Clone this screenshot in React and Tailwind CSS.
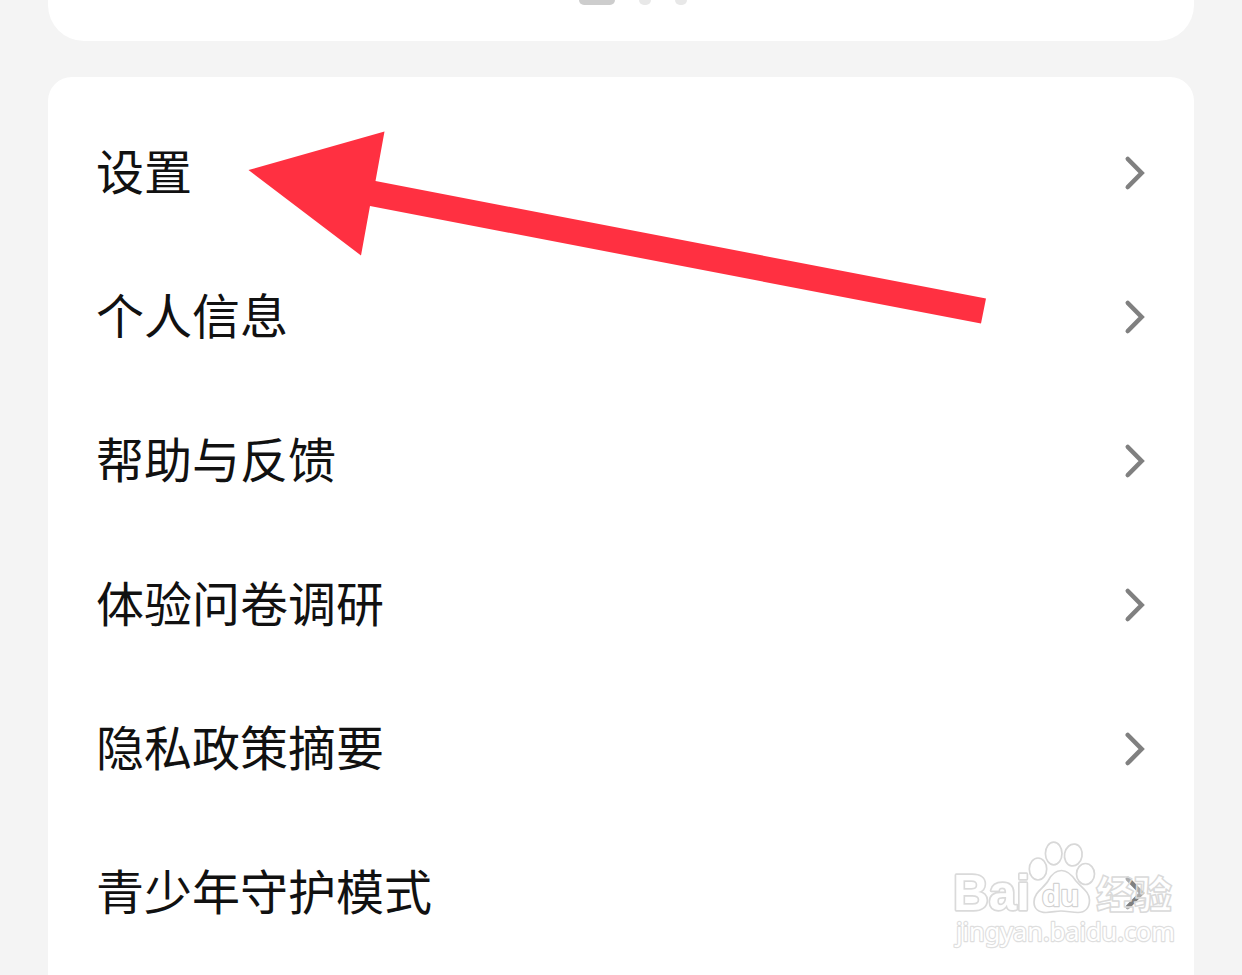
const MENU_ITEMS = ["设置", "个人信息", "帮助与反馈", "体验问卷调研", "隐私政策摘要", "青少年守护模式"];

function Chevron() {
  return (
    <svg width="24" height="36" viewBox="0 0 24 36" fill="none" className="shrink-0">
      <path d="M5.8 4 L19.6 18 L5.8 32" stroke="#808080" strokeWidth="4.6" strokeLinecap="round" />
    </svg>
  );
}

function MenuRow({ label }) {
  return (
    <li className="flex h-36 items-center justify-between">
      <span className="pb-[9px] text-5xl leading-none text-[#111111]">{label}</span>
      <Chevron />
    </li>
  );
}

function PageDots() {
  return (
    <div className="flex items-start justify-center gap-6 pl-[23px]">
      <span className="h-[5px] w-9 rounded-b-[6px] bg-[#cdcdcd]" />
      <span className="h-[5px] w-3 rounded-b-[6px] bg-[#e8e8e8]" />
      <span className="h-[5px] w-3 rounded-b-[6px] bg-[#e8e8e8]" />
    </div>
  );
}

function Arrow() {
  return (
    <svg width="738" height="194" viewBox="0 0 738 194" className="absolute left-[248px] top-[131px]">
      <path d="M.5 39 L136.5 .5 L127.5 50 L738 167.5 L733 192.5 L122 75 L113 124.5 Z" fill="#ff3041" />
    </svg>
  );
}

function Watermark() {
  return (
    <svg
      width="240"
      height="120"
      viewBox="0 0 240 120"
      fill="#ffffff"
      stroke="#dadada"
      strokeLinejoin="round"
      className="absolute left-[945px] top-[835px]"
    >
      <text x="8" y="75" fontSize="50" fontWeight="700" strokeWidth="3.4" textLength="77" lengthAdjust="spacingAndGlyphs" className="font-['Liberation_Sans'] [paint-order:stroke]">
        Bai
      </text>
      <text x="151" y="73" fontSize="38" fontWeight="900" strokeWidth="1.5" fillOpacity="0.35" textLength="76" lengthAdjust="spacingAndGlyphs" className="font-['Noto_Sans_CJK_SC']">
        经验
      </text>
      <text x="11" y="106" fontSize="26" strokeWidth="2.4" stroke="#dedede" textLength="219" lengthAdjust="spacingAndGlyphs" className="font-['Noto_Sans'] [paint-order:stroke]">
        jingyan.baidu.com
      </text>
      <g strokeWidth="1.7" stroke="#d8d8d8">
        <ellipse cx="93" cy="34" rx="8.7" ry="11" />
        <ellipse cx="108.7" cy="18.5" rx="8.3" ry="11.3" />
        <ellipse cx="128.3" cy="20" rx="8.8" ry="11" transform="rotate(10 128.3 20)" />
        <ellipse cx="140.5" cy="39" rx="9" ry="10.5" />
        <path d="M116.5 35.5 C110 35.5 106 40 103 46 C99 53 89 57 89 67 C89 74 94 77.5 101 77.5 C107 77.5 111 76 116 76 C122 76 127 77.5 133 77.5 C140 77.5 144.5 73 144.5 65 C144.5 57 137 53 131 46 C127 40 123 35.5 116.5 35.5 Z" />
      </g>
      <text x="97" y="70.5" fontSize="30" fontWeight="700" stroke="#d2d2d2" strokeWidth="2.4" textLength="37" lengthAdjust="spacingAndGlyphs" className="font-['Liberation_Sans'] [paint-order:stroke]">
        du
      </text>
    </svg>
  );
}

export default function App() {
  return (
    <main className="relative flex h-[975px] w-[1242px] flex-col gap-9 overflow-hidden bg-[#f4f4f4] px-12 font-['Noto_Sans_CJK_SC',sans-serif]">
      <section className="h-[41px] shrink-0 rounded-b-[36px] bg-white">
        <PageDots />
      </section>
      <section className="grow rounded-t-3xl bg-white px-12 pt-6">
        <ul>
          {MENU_ITEMS.map((label) => (
            <MenuRow key={label} label={label} />
          ))}
        </ul>
      </section>
      <Arrow />
      <Watermark />
    </main>
  );
}
